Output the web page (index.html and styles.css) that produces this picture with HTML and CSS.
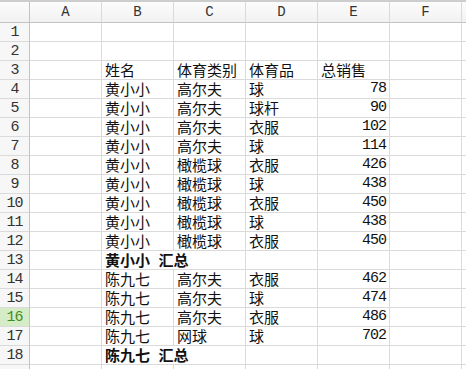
FILE: index.html
```html
<!DOCTYPE html>
<html lang="zh-CN">
<head>
    <meta charset="UTF-8">
    <title>销售汇总</title>
    <link rel="stylesheet" href="styles.css">
</head>
<body>
    <div class="topbar"></div>
    <div class="sheet">
        <!-- column headers -->
        <div class="corner"></div>
        <div class="col-head">A</div>
        <div class="col-head">B</div>
        <div class="col-head">C</div>
        <div class="col-head">D</div>
        <div class="col-head">E</div>
        <div class="col-head">F</div>
        <div class="col-head"></div>

        <div class="row-head">1</div>
        <div class="cell"></div><div class="cell"></div><div class="cell"></div><div class="cell"></div><div class="cell"></div><div class="cell"></div><div class="cell"></div>

        <div class="row-head">2</div>
        <div class="cell"></div><div class="cell"></div><div class="cell"></div><div class="cell"></div><div class="cell"></div><div class="cell"></div><div class="cell"></div>

        <div class="row-head">3</div>
        <div class="cell"></div><div class="cell">姓名</div><div class="cell">体育类别</div><div class="cell">体育品</div><div class="cell">总销售</div><div class="cell"></div><div class="cell"></div>

        <div class="row-head">4</div>
        <div class="cell"></div><div class="cell">黄小小</div><div class="cell">高尔夫</div><div class="cell">球</div><div class="cell num">78</div><div class="cell"></div><div class="cell"></div>

        <div class="row-head">5</div>
        <div class="cell"></div><div class="cell">黄小小</div><div class="cell">高尔夫</div><div class="cell">球杆</div><div class="cell num">90</div><div class="cell"></div><div class="cell"></div>

        <div class="row-head">6</div>
        <div class="cell"></div><div class="cell">黄小小</div><div class="cell">高尔夫</div><div class="cell">衣服</div><div class="cell num">102</div><div class="cell"></div><div class="cell"></div>

        <div class="row-head">7</div>
        <div class="cell"></div><div class="cell">黄小小</div><div class="cell">高尔夫</div><div class="cell">球</div><div class="cell num">114</div><div class="cell"></div><div class="cell"></div>

        <div class="row-head">8</div>
        <div class="cell"></div><div class="cell">黄小小</div><div class="cell">橄榄球</div><div class="cell">衣服</div><div class="cell num">426</div><div class="cell"></div><div class="cell"></div>

        <div class="row-head">9</div>
        <div class="cell"></div><div class="cell">黄小小</div><div class="cell">橄榄球</div><div class="cell">球</div><div class="cell num">438</div><div class="cell"></div><div class="cell"></div>

        <div class="row-head">10</div>
        <div class="cell"></div><div class="cell">黄小小</div><div class="cell">橄榄球</div><div class="cell">衣服</div><div class="cell num">450</div><div class="cell"></div><div class="cell"></div>

        <div class="row-head">11</div>
        <div class="cell"></div><div class="cell">黄小小</div><div class="cell">橄榄球</div><div class="cell">球</div><div class="cell num">438</div><div class="cell"></div><div class="cell"></div>

        <div class="row-head">12</div>
        <div class="cell"></div><div class="cell">黄小小</div><div class="cell">橄榄球</div><div class="cell">衣服</div><div class="cell num">450</div><div class="cell"></div><div class="cell"></div>

        <div class="row-head">13</div>
        <div class="cell"></div><div class="cell total">黄小小 汇总</div><div class="cell"></div><div class="cell"></div><div class="cell"></div><div class="cell"></div>

        <div class="row-head">14</div>
        <div class="cell"></div><div class="cell">陈九七</div><div class="cell">高尔夫</div><div class="cell">衣服</div><div class="cell num">462</div><div class="cell"></div><div class="cell"></div>

        <div class="row-head">15</div>
        <div class="cell"></div><div class="cell">陈九七</div><div class="cell">高尔夫</div><div class="cell">球</div><div class="cell num">474</div><div class="cell"></div><div class="cell"></div>

        <div class="row-head active">16</div>
        <div class="cell"></div><div class="cell">陈九七</div><div class="cell">高尔夫</div><div class="cell">衣服</div><div class="cell num">486</div><div class="cell"></div><div class="cell"></div>

        <div class="row-head">17</div>
        <div class="cell"></div><div class="cell">陈九七</div><div class="cell">网球</div><div class="cell">球</div><div class="cell num">702</div><div class="cell"></div><div class="cell"></div>

        <div class="row-head">18</div>
        <div class="cell"></div><div class="cell total">陈九七 汇总</div><div class="cell"></div><div class="cell"></div><div class="cell"></div><div class="cell"></div>

        <!-- next row, only its top shows -->
        <div class="row-head"></div>
        <div class="cell"></div><div class="cell"></div><div class="cell"></div><div class="cell"></div><div class="cell"></div><div class="cell"></div><div class="cell"></div>
    </div>
</body>
</html>
```

FILE: styles.css
```css
:root {
    --grid-line: #dadada;
    --head-line: #c2c2c2;
    --head-bg: #f7f7f7;
    --text-color: #111;
    --active-bg: #d6ecc6;
    --active-text: #3f8f22;
}

body {
    margin: 0;
    height: 369px;
    overflow: hidden;
    background: #fff;
    color: var(--text-color);
    font-family: "Noto Sans CJK SC", "Liberation Sans", sans-serif;
}

.topbar {
    height: 2px;
    background: #cdcdcd;
}

.sheet {
    display: grid;
    grid-template-columns: 30px repeat(6, 72px) 1fr;
    grid-template-rows: 21px;
    grid-auto-rows: 19px;
}

.sheet > div {
    box-sizing: border-box;
    border-right: 1px solid var(--grid-line);
    border-bottom: 1px solid var(--grid-line);
    white-space: nowrap;
}

.corner,
.col-head {
    background: linear-gradient(#fcfcfc, #f2f2f2);
    border-bottom-color: var(--head-line) !important;
}

.corner {
    border-right-color: var(--head-line) !important;
}

.col-head {
    text-align: center;
    font-family: "Liberation Mono", monospace;
    font-size: 14px;
    line-height: 20px;
    color: #333;
}

.row-head {
    background: var(--head-bg);
    border-right-color: var(--head-line) !important;
    text-align: center;
    font-family: "Liberation Mono", monospace;
    font-size: 15px;
    letter-spacing: -1px;
    line-height: 19px;
    color: #333;
}

.row-head.active {
    background: var(--active-bg);
    color: var(--active-text);
}

.cell {
    padding: 0 2px 0 3px;
    font-size: 15px;
    line-height: 18px;
}

.num {
    text-align: right;
    font-family: "Liberation Mono", monospace;
    font-size: 15px;
    letter-spacing: -1px;
    padding-right: 3px;
}

.total {
    grid-column: span 2;
    font-weight: bold;
    word-spacing: 5px;
}
```
